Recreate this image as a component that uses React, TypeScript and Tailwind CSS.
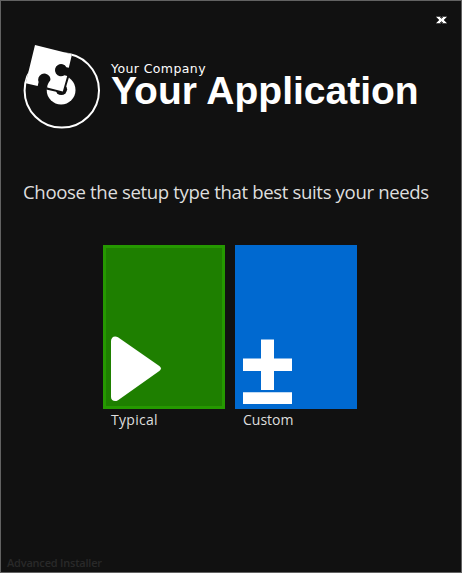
const uiFont = "font-['Open_Sans','Noto_Sans',sans-serif]";

function Logo() {
  return (
    <svg className="block h-[92px] w-[84px] shrink-0" viewBox="20 40 84 92">
      <circle cx="61.8" cy="90.4" r="37.2" fill="none" stroke="#fff" strokeWidth="2" />
      <path d="M35 45L72 54.3L71 66L60 88L26 83Z" fill="#111" />
      <circle cx="61.1" cy="90" r="14.4" fill="#fff" />
      <circle cx="61.3" cy="89.3" r="5.8" fill="#111" />
      <circle cx="61" cy="71" r="6" fill="#111" />
      <path d="M68 75.4L63 91.8L46.4 88" fill="none" stroke="#111" strokeWidth="3" />
      <path
        d="M35 45L72 54.3L68.8 67.8L66.4 67.2A6.1 6.1 0 1 0 64.5 75.2L67.2 76L62.8 91.4L47.2 87.5L48.4 84.4A6.2 6.2 0 1 0 38.6 82L37.7 86L25.7 83.3Z"
        fill="#fff"
      />
    </svg>
  );
}

function PlayIcon() {
  return (
    <svg className="block h-[66px] w-[51px]" viewBox="0 0 51 66">
      <path d="M0 5C0 .8 3.8-.8 7 1.3L48.3 30Q51.6 32.5 48.3 35L7 64.2C3.8 66.2 0 64.7 0 61Z" fill="#fff" />
    </svg>
  );
}

function PlusMinusIcon() {
  return (
    <svg className="block h-[66px] w-[49px]" viewBox="0 0 49 66">
      <path d="M18 .5H31V19.5H49V32H31V51H18V32H0V19.5H18ZM0 53.2H49V65H0Z" fill="#fff" />
    </svg>
  );
}

export default function App() {
  return (
    <main className={`flex h-[573px] w-[462px] flex-col overflow-hidden border border-[#626262] bg-[#111111] text-[#dedede] ${uiFont}`}>
      <div className="flex h-[38px] shrink-0 justify-end pt-[15px] pr-[14px]">
        <button className="h-2 w-[11px]" aria-label="Close">
          <svg className="block h-2 w-[11px]" viewBox="0 0 11 8" shapeRendering="crispEdges">
            <path d="M0 0H5V1H6V0H11V2H10V3H9V5H10V6H11V8H6V7H5V8H0V6H1V5H2V3H1V2H0Z" fill="#4c4c4c" />
            <path d="M1 1H4V2H7V1H10V2H9V3H8V5H9V6H10V7H7V6H4V7H1V6H2V5H3V3H2V2H1Z" fill="#fff" />
            <path d="M5 2H6V3H5ZM5 5H6V6H5Z" fill="#777" />
          </svg>
        </button>
      </div>
      <header className="flex h-[94px] shrink-0 pl-[19px]">
        <div className="pt-px"><Logo /></div>
        <div className="ml-[7px] pt-[22px] whitespace-nowrap text-white">
          <div className="h-[13px] font-['DejaVu_Sans',sans-serif] text-[12.5px] leading-[16px] tracking-[0.4px]">Your Company</div>
          <h1 className="font-['Liberation_Sans',sans-serif] text-[39px] leading-[34px] font-bold">Your Application</h1>
        </div>
      </header>
      <p className="mt-[45px] h-7 shrink-0 pl-[22px] text-[18.6px] leading-7 tracking-[-0.36px] whitespace-nowrap">
        Choose the setup type that best suits your needs
      </p>
      <div className="mt-[39px] flex gap-[10px] pl-[102px]">
        <button className="w-[122px] text-left">
          <span className="flex h-[164px] items-end border-3 border-[#259800] bg-[#1e7f00] pb-1 pl-[5px]"><PlayIcon /></span>
          <span className="block pl-2 text-[14px] leading-[22px] tracking-[0.3px]">Typical</span>
        </button>
        <button className="w-[122px] text-left">
          <span className="flex h-[164px] items-end bg-[#0069d0] pb-1 pl-2"><PlusMinusIcon /></span>
          <span className="block pl-2 text-[14px] leading-[22px]">Custom</span>
        </button>
      </div>
      <footer className="mt-auto pl-[6px] text-[11px] leading-[18px] font-semibold tracking-[-0.2px] text-[#292929]">Advanced Installer</footer>
    </main>
  );
}
